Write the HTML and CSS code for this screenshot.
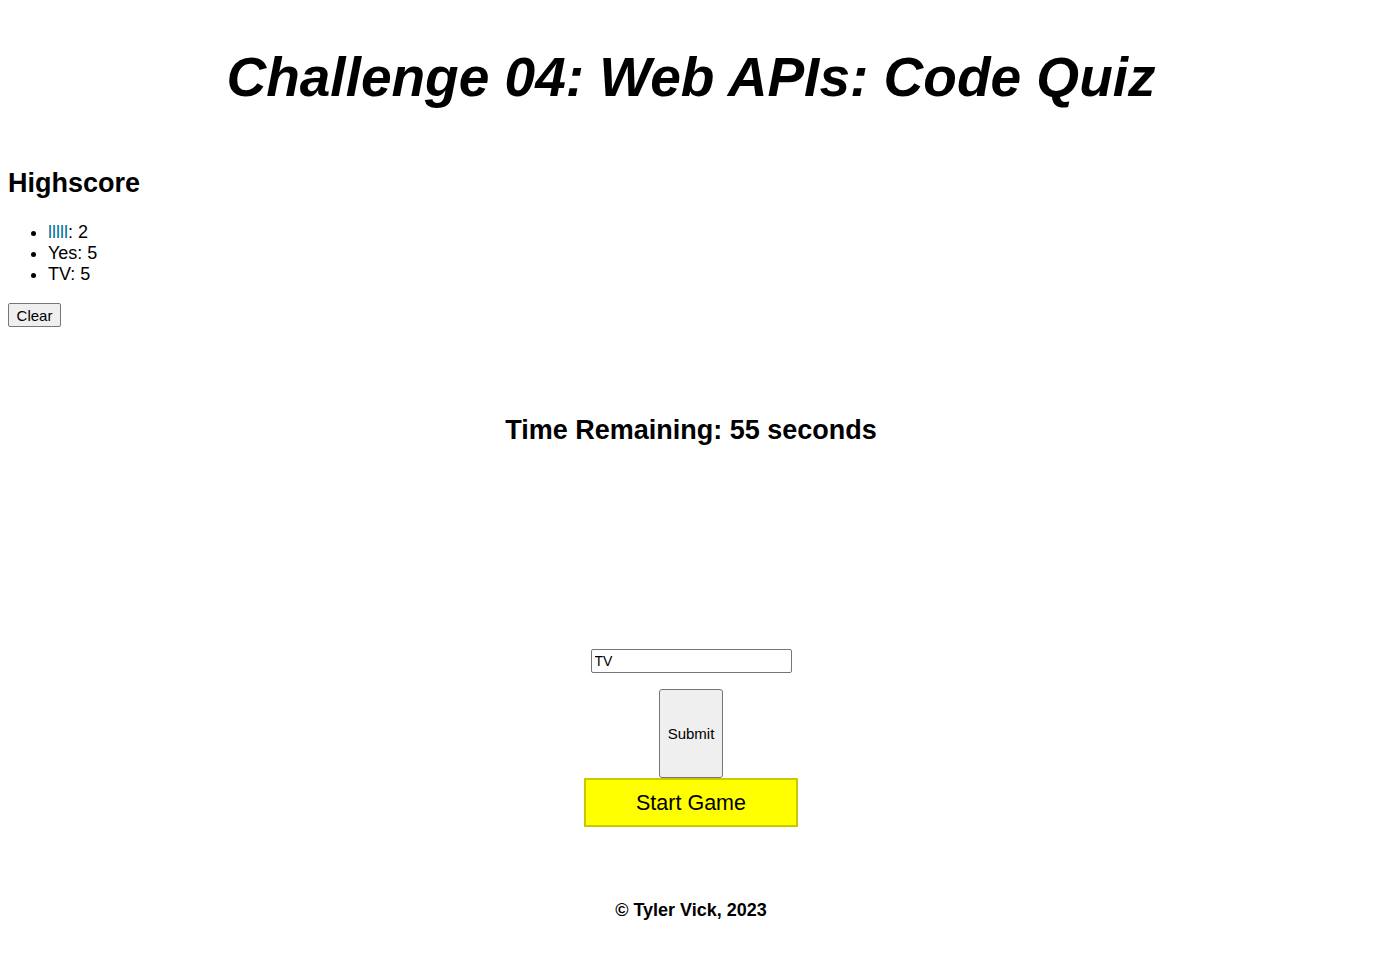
FILE: index.html
```html
<!DOCTYPE html>
<html lang="en">
<head>
<meta charset="utf-8">
<title>Code Quiz</title>
<link rel="stylesheet" href="styles.css">
</head>
<body>
<header class="site-header">
  <h1 class="title">Challenge 04: Web APIs: Code Quiz</h1>
</header>
<section class="scores">
  <h2 class="scores-title">Highscore</h2>
  <ul class="score-list">
    <li><span class="name-odd">lllll</span>: 2</li>
    <li>Yes: 5</li>
    <li>TV: 5</li>
  </ul>
  <button class="btn clear-btn" type="button">Clear</button>
</section>
<main class="quiz">
  <h2 class="timer">Time Remaining: 55 seconds</h2>
  <form class="entry">
    <input class="name-input" type="text" value="TV">
    <button class="btn submit-btn" type="button">Submit</button>
  </form>
  <button class="start-btn" type="button">Start Game</button>
</main>
<footer class="site-footer">
  <p class="copy">© Tyler Vick, 2023</p>
</footer>
</body>
</html>
```
FILE: styles.css
```css
html, body {
  background: #ffffff;
}
body {
  margin: 0 8px;
  font-family: "Liberation Sans", Arial, sans-serif;
  font-size: 18px;
  color: #000;
}
.site-header {
  display: flex;
  justify-content: center;
}
.title {
  margin: 46px 0 0;
  font-size: 55px;
  font-style: italic;
  font-weight: bold;
  line-height: 63px;
}
.scores-title {
  margin: 59px 0 23px;
  font-size: 27px;
  line-height: 31px;
  font-weight: bold;
}
.score-list {
  margin: 0 0 18px;
  padding-left: 40px;
}
.score-list li {
  line-height: 21px;
}
.name-odd {
  color: #00709c;
}
.btn {
  font-family: "Liberation Sans", Arial, sans-serif;
  font-size: 15px;
  color: #000;
  background: #efefef;
  border: 1px solid #767676;
  border-radius: 2px;
  padding: 0 7px;
}
.clear-btn {
  display: block;
  height: 24px;
  width: 53px;
}
.quiz {
  display: flex;
  flex-direction: column;
  align-items: center;
}
.timer {
  margin: 88px 0 0;
  font-size: 27px;
  line-height: 31px;
  font-weight: bold;
}
.entry {
  margin-top: 203px;
  display: flex;
  flex-direction: column;
  align-items: center;
}
.name-input {
  box-sizing: border-box;
  width: 201px;
  height: 24px;
  margin: 0;
  padding: 1px 3px;
  border: 1px solid #767676;
  border-radius: 2px;
  font-family: "Liberation Sans", Arial, sans-serif;
  font-size: 14px;
  color: #000;
}
.submit-btn {
  margin-top: 16px;
  width: 64px;
  height: 89px;
  border-radius: 3px;
}
.start-btn {
  box-sizing: border-box;
  width: 214px;
  height: 49px;
  background: #ffff00;
  border: 2px solid #c9c900;
  font-family: "Liberation Sans", Arial, sans-serif;
  font-size: 21.5px;
  color: #000;
  padding: 2px 0 0;
}
.site-footer {
  display: flex;
  justify-content: center;
}
.copy {
  margin: 73px 0 0;
  font-weight: bold;
  font-size: 18px;
  line-height: 21px;
}
```
